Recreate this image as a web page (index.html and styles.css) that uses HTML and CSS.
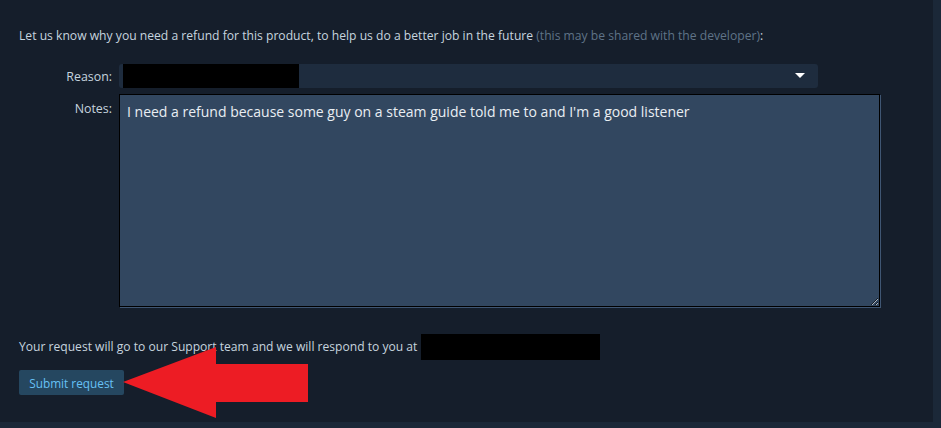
FILE: index.html
```html
<!DOCTYPE html>
<html lang="en">

<head>
    <meta charset="UTF-8">
    <title>Refund request</title>
    <link rel="stylesheet" href="styles.css">
</head>

<body>
    <div class="panel">
        <p class="intro">Let us know why you need a refund for this product, to help us do a better job in the future <span class="muted">(this may be shared with the developer)</span>:</p>

        <div class="form-row">
            <label class="label">Reason:</label>
            <div class="select">
                <span class="redact redact-reason"></span>
                <span class="caret"></span>
            </div>
        </div>

        <div class="form-row">
            <label class="label label-top">Notes:</label>
            <textarea class="notes">I need a refund because some guy on a steam guide told me to and I'm a good listener</textarea>
        </div>

        <p class="footer-text">Your request will go to our Support team and we will respond to you at <span class="redact redact-email"></span></p>

        <div class="actions">
            <button class="btn-submit">Submit request</button>
            <svg class="arrow" width="186" height="72" viewBox="0 0 186 72">
                <polygon points="0,35 93,0 93,17 185,17 185,55 93,55 93,71" fill="#ed1c24" />
            </svg>
        </div>
    </div>
</body>

</html>
```

FILE: styles.css
```css
/* page */
body {
    margin: 0;
    background-color: #1b2838;
    font-family: "Open Sans", "Liberation Sans", Arial, sans-serif;
    color: #c6d4df;
}

.panel {
    position: relative;
    width: 933px;
    height: 422px;
    box-sizing: border-box;
    padding: 27px 0 0 19px;
    background-color: #151e2b;
}

.intro {
    margin: 0 0 19px 0;
    font-size: 12.15px;
    line-height: 18px;
}

.muted {
    color: #5f7387;
}

/* form rows */
.form-row {
    display: flex;
    gap: 7px;
    margin-bottom: 6px;
}

.label {
    width: 93px;
    height: 24px;
    text-align: right;
    font-size: 12.4px;
    line-height: 26px;
}

.label-top {
    line-height: 30px;
}

.select {
    position: relative;
    display: flex;
    align-items: center;
    width: 699px;
    height: 24px;
    border-radius: 3px;
    background-color: #1e2c3e;
    overflow: hidden;
}

.redact {
    display: inline-block;
    background-color: #000000;
}

.redact-reason {
    width: 176px;
    height: 24px;
    margin-left: 4px;
}

.caret {
    position: absolute;
    right: 13px;
    top: 9px;
    border-left: 5px solid transparent;
    border-right: 5px solid transparent;
    border-top: 5px solid #ffffff;
}

.notes {
    width: 761px;
    height: 213px;
    box-sizing: border-box;
    padding: 8px 7px;
    margin: 0;
    border: 1px solid #000000;
    box-shadow: 1px 1px 0 #3f5673;
    background-color: #324760;
    color: #e9eef3;
    font-family: "Open Sans", "Liberation Sans", Arial, sans-serif;
    font-size: 14px;
    line-height: 18px;
    resize: both;
    outline: none;
}

/* footer */
.footer-text {
    display: flex;
    align-items: center;
    gap: 4px;
    margin: 27px 0 10px 0;
    font-size: 12.1px;
    line-height: 26px;
}

.redact-email {
    width: 179px;
    height: 26px;
}

.actions {
    position: relative;
}

.btn-submit {
    width: 105px;
    height: 25px;
    padding: 0;
    border: none;
    border-radius: 2px;
    background-color: #254760;
    color: #67c1f5;
    font-family: "Open Sans", "Liberation Sans", Arial, sans-serif;
    font-size: 11.8px;
}

.arrow {
    position: absolute;
    left: 104px;
    top: -23px;
}
```
